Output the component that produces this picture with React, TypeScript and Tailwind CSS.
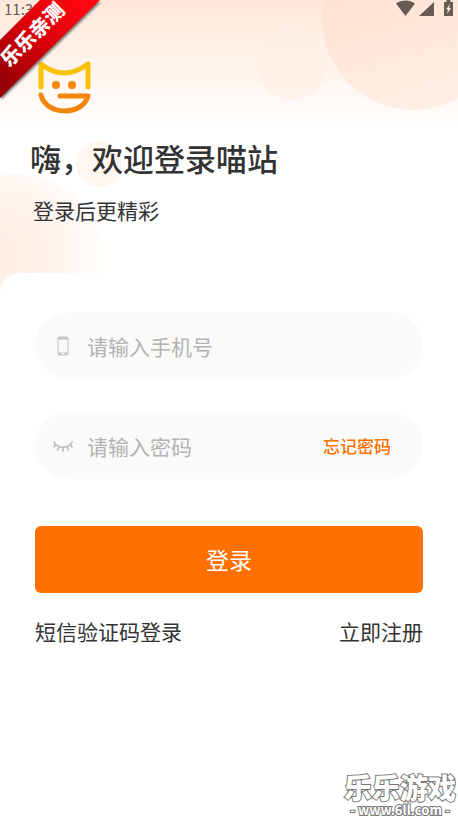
import React from "react";

function StatusBar() {
  return (
    <div className="flex h-[18px] items-start justify-between pl-1 text-[#675c54]">
      <span className="text-[15px] leading-[18px]">11:30</span>
      <svg viewBox="0 0 62 18" className="h-[18px] w-[62px]" fill="currentColor" aria-hidden="true">
        <path d="M0 3.5C5 -.5 14 -.5 19 3.5L9.500 16z" />
        <path d="M38 2v14H23z" />
        <path d="M48 2h2.500V0h4v2H57v14h-9z" />
        <path d="M54 4l-4 5.500h2L51 14l4-6h-2z" fill="#ffe9dc" />
      </svg>
    </div>
  );
}

function Backdrop() {
  return (
    <svg className="absolute top-0 right-0 h-[300px] w-[458px]" viewBox="0 0 458 300" aria-hidden="true">
      <defs>
        <linearGradient id="big" x1="0" y1="0" x2="0.3" y2="1">
          <stop offset="0" stopColor="#ffdcc6" />
          <stop offset="1" stopColor="#feeee3" />
        </linearGradient>
        <linearGradient id="small" x1="0" y1="0" x2="0" y2="1">
          <stop offset="0" stopColor="#feefe4" />
          <stop offset="1" stopColor="#fff3eb" />
        </linearGradient>
        <radialGradient id="glow" cx="0" cy="255" r="105" gradientUnits="userSpaceOnUse">
          <stop offset="0" stopColor="#ffede2" />
          <stop offset="0.500" stopColor="#fff3ec" />
          <stop offset="1" stopColor="#fffdfb" />
        </radialGradient>
      </defs>
      <circle cx="292" cy="63" r="36" fill="url(#small)" />
      <circle cx="413" cy="19" r="91" fill="url(#big)" />
      <circle cx="99" cy="164" r="23" fill="#fff6f0" />
      <circle cx="16" cy="262" r="88" fill="url(#glow)" />
    </svg>
  );
}

function Logo() {
  return (
    <svg viewBox="0 0 54 54" className="h-[54px] w-[54px]" fill="none" strokeLinecap="round" strokeLinejoin="round" strokeWidth="5" aria-label="喵站" role="img">
      <path d="M4 27V4Q27 22 51 4V27" stroke="#fbc108" />
      <path d="M4 35C9 56 46 56 51 36H23" stroke="#f2850c" />
      <circle cx="19" cy="25" r="4" fill="#f2850c" />
      <circle cx="35" cy="25" r="4" fill="#f2850c" />
    </svg>
  );
}

function Ribbon() {
  return (
    <div className="absolute top-0 left-0 h-[102px] w-[102px]">
      <svg viewBox="0 0 102 102" className="absolute inset-0 drop-shadow-[1px_2px_1px_#777]" aria-hidden="true">
        <defs>
          <linearGradient id="red" x1="0" y1="80" x2="80" y2="0" gradientUnits="userSpaceOnUse">
            <stop offset="0" stopColor="#950006" />
            <stop offset="0.500" stopColor="#d90008" />
            <stop offset="1" stopColor="#ff0810" />
          </linearGradient>
        </defs>
        <path d="M40 0H100L0 98V40z" fill="url(#red)" />
      </svg>
      <span className="absolute top-[24px] left-[-10px] w-[84px] -rotate-45 text-center text-[20px] leading-5 font-black text-white">
        乐乐亲测
      </span>
    </div>
  );
}

function PhoneIcon() {
  return (
    <svg viewBox="0 0 20 20" className="h-5 w-5 shrink-0" fill="none" stroke="#c0c0c0" aria-hidden="true">
      <rect x="5" y="1" width="10" height="18" rx="1.500" />
      <path d="M5 2.500h10M5 17.500h10" strokeWidth="2" />
      <path d="M8.500 17.500h3" stroke="#fff" />
    </svg>
  );
}

function ClosedEyeIcon() {
  return (
    <svg viewBox="0 0 20 20" className="h-5 w-5 shrink-0" fill="none" stroke="#b8b8b8" strokeWidth="1.500" strokeLinecap="round" aria-hidden="true">
      <path d="M1 6C5 13 15 13 19 6M2.500 8.500L1 11M6 10.500L4.500 14M10 11.500V15M14 10.500L15.500 14M17.500 8.500L19 11" />
    </svg>
  );
}

function Field({ id, label, type, icon, children }: {
  id: string;
  label: string;
  type: string;
  icon: React.ReactNode;
  children?: React.ReactNode;
}) {
  return (
    <div className="flex h-[67px] items-center rounded-full bg-[#fafafa] pr-8 pl-[18px]">
      <label htmlFor={id}>{icon}</label>
      <input
        id={id}
        type={type}
        aria-label={label}
        placeholder={label}
        className="ml-3.5 min-w-0 flex-1 bg-transparent text-[21px] leading-8 text-[#333] outline-none placeholder:text-[#b3b3b3]"
      />
      {children}
    </div>
  );
}

function Watermark() {
  return (
    <div className="absolute right-0 bottom-0 w-[118px] text-center">
      <svg viewBox="0 0 118 52" className="h-[52px] w-[118px]" fill="#fff" stroke="#777" strokeWidth="2" paintOrder="stroke" textAnchor="middle">
        <text x="60" y="31" fontSize="28" fontWeight="900">乐乐游戏</text>
        <text x="60" y="47" fontSize="13" fontWeight="700">- www.6ll.com -</text>
      </svg>
    </div>
  );
}

export default function App() {
  return (
    <div className="relative flex min-h-screen flex-col overflow-hidden bg-white font-['Noto_Sans_CJK_SC',sans-serif] text-[#333]">
      <div className="absolute inset-x-0 top-0 h-[130px] bg-linear-to-b from-[#ffe8d9] to-white" />
      <Backdrop />
      <header className="relative h-[273px]">
        <StatusBar />
        <div className="px-[30px]">
          <div className="mt-[42px] ml-[7px]">
            <Logo />
          </div>
          <h1 className="mt-[22px] text-[31px] leading-[44px] font-medium">嗨，欢迎登录喵站</h1>
          <p className="mt-[14px] ml-[3px] text-[21px] leading-8">登录后更精彩</p>
        </div>
      </header>
      <main className="relative flex-1 rounded-t-[20px] bg-white px-[35px] pt-[39px]">
        <form onSubmit={(e) => e.preventDefault()}>
          <div className="flex flex-col gap-[33px]">
            <Field id="phone" label="请输入手机号" type="tel" icon={<PhoneIcon />} />
            <Field id="password" label="请输入密码" type="password" icon={<ClosedEyeIcon />}>
              <a href="#" className="text-[17px] leading-6 font-medium text-[#ff7000]">忘记密码</a>
            </Field>
          </div>
          <button type="submit" className="mt-[47px] h-[67px] w-full rounded-md bg-[#ff7000] text-[23px] text-white">
            登录
          </button>
        </form>
        <nav className="mt-[22px] flex justify-between text-[21px] leading-8">
          <a href="#">短信验证码登录</a>
          <a href="#">立即注册</a>
        </nav>
      </main>
      <Ribbon />
      <Watermark />
    </div>
  );
}
